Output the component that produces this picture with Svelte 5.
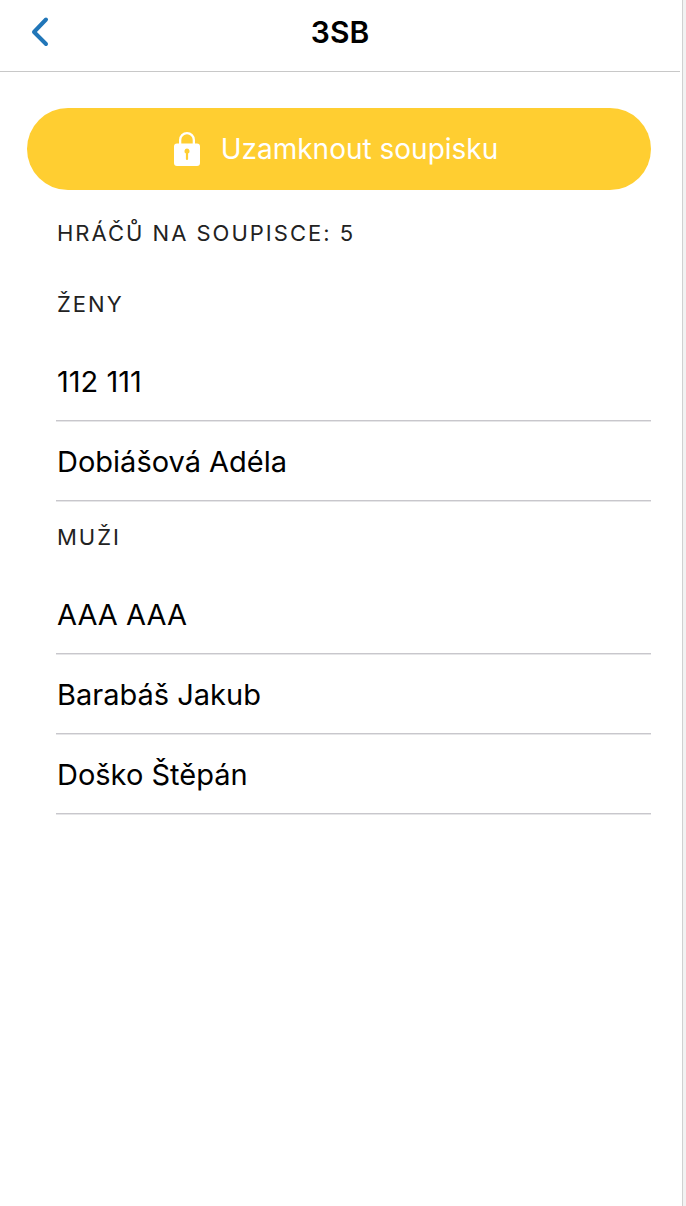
<script>
  const groups = [
    { title: 'Ženy', players: ['112 111', 'Dobiášová Adéla'] },
    { title: 'Muži', players: ['AAA AAA', 'Barabáš Jakub', 'Doško Štěpán'] }
  ];
  const count = groups.reduce((sum, group) => sum + group.players.length, 0);
</script>

<div class="screen">
  <header>
    <button class="back" aria-label="Zpět">
      <svg width="20" height="32" viewBox="0 0 20 32" aria-hidden="true">
        <path d="M16 3.500 4 16l12 12" />
      </svg>
    </button>
    <h1>3SB</h1>
  </header>
  <main>
    <button class="lock">
      <svg width="26" height="34" viewBox="0 0 26 34" aria-hidden="true">
        <path fill-rule="evenodd" d="M3 11.500H5V8a8 8 0 0 1 16 0v3.500h2a3 3 0 0 1 3 3V31a3 3 0 0 1-3 3H3a3 3 0 0 1-3-3V14.500a3 3 0 0 1 3-3ZM7.300 11.500h11.400V8a5.700 5.700 0 0 0-11.400 0ZM13 16.500a2.700 2.700 0 0 0-1.100 5.100V27a1.100 1.100 0 0 0 2.200 0v-5.400A2.700 2.700 0 0 0 13 16.500Z" />
      </svg>
      <span>Uzamknout soupisku</span>
    </button>
    <p class="caption">Hráčů na soupisce: {count}</p>
    {#each groups as group}
      <section>
        <h2 class="caption">{group.title}</h2>
        <ul>
          {#each group.players as player}
            <li>{player}</li>
          {/each}
        </ul>
      </section>
    {/each}
  </main>
</div>

<style>
  :global(body) {
    margin: 0;
    background: #f2f2f2;
  }
  .screen {
    box-sizing: border-box;
    min-height: 100vh;
    margin-right: 3px;
    border-right: 1px solid #d0d0d0;
    background: #fff;
    color: #000;
    font-family: Inter, 'Liberation Sans', sans-serif;
  }
  header {
    display: grid;
    grid-template-columns: 56px 1fr 56px;
    align-items: center;
    height: 72px;
    box-sizing: border-box;
    margin-right: 2px;
    padding-bottom: 7px;
    border-bottom: 1px solid #c8c8c8;
  }
  button {
    border: 0;
    font: inherit;
    cursor: pointer;
  }
  .back {
    display: flex;
    padding: 0 0 0 30px;
    background: none;
  }
  .back path {
    fill: none;
    stroke: #2176b8;
    stroke-width: 4;
    stroke-linecap: round;
    stroke-linejoin: round;
  }
  h1 {
    margin: 0;
    font-size: 30px;
    line-height: 40px;
    font-weight: 600;
    text-align: center;
  }
  main {
    padding: 36px 31px 0 27px;
  }
  .lock {
    display: flex;
    align-items: center;
    justify-content: center;
    gap: 21px;
    width: 100%;
    height: 82px;
    margin-bottom: 7px;
    padding: 0 6px 0 0;
    border-radius: 41px;
    background: #ffce31;
    color: #fff;
    font-size: 28px;
  }
  .lock path {
    fill: #fff;
  }
  .caption {
    margin: 0 0 0 30px;
    padding: 21px 0 19px;
    color: #222;
    font-size: 22px;
    line-height: 31px;
    font-weight: 400;
    letter-spacing: 2px;
    text-transform: uppercase;
  }
  ul {
    margin: 0 0 0 29px;
    padding: 2px 0 0;
    list-style: none;
  }
  li {
    padding: 21px 1px 19px;
    border-bottom: 1px solid #c8c7cc;
    box-shadow: 0 1px #e6e6e8;
    font-size: 29px;
    line-height: 39px;
  }
</style>
